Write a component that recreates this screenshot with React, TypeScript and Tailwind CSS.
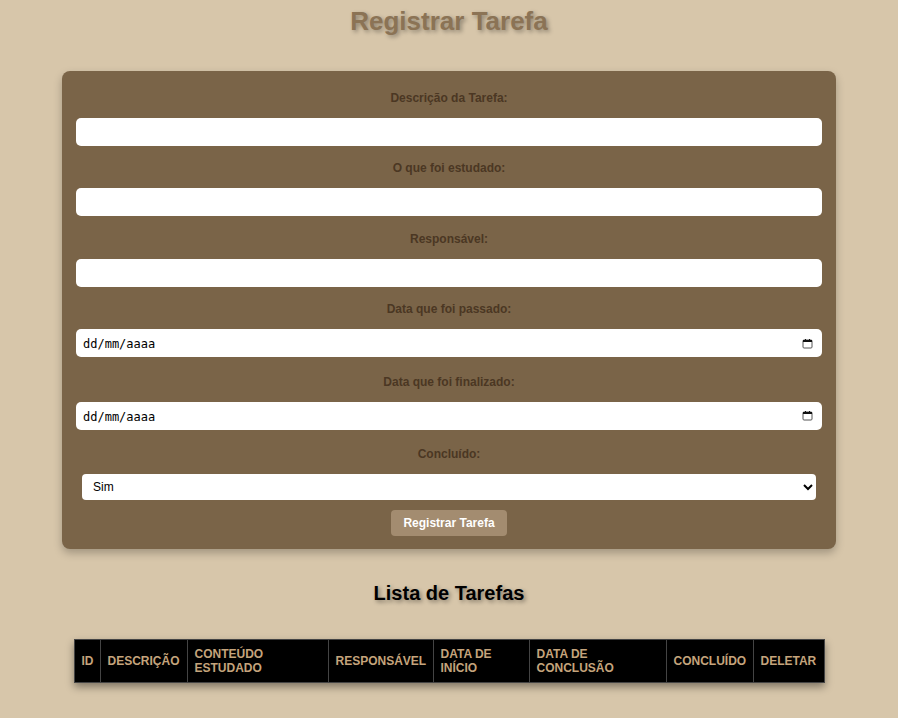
import React, { useState } from "react";

const fields = [
  { label: "Descrição da Tarefa:", type: "text" },
  { label: "O que foi estudado:", type: "text" },
  { label: "Responsável:", type: "text" },
  { label: "Data que foi passado:", type: "date" },
  { label: "Data que foi finalizado:", type: "date" },
];

const columns = [
  { title: "ID", w: "w-[26px]" },
  { title: "Descrição", w: "w-[87px]" },
  { title: "Conteúdo Estudado", w: "w-[141px]" },
  { title: "Responsável", w: "w-[105px]" },
  { title: "Data de Início", w: "w-[96px]" },
  { title: "Data de Conclusão", w: "w-[137px]" },
  { title: "Concluído", w: "w-[87px]" },
  { title: "Deletar", w: "w-[71px]" },
];

const CalendarIcon = () => (
  <svg width="11" height="11" viewBox="0 0 11 11" className="shrink-0">
    <rect x="1" y="2" width="9" height="8" rx="1" fill="white" stroke="#555" strokeWidth="1" />
    <rect x="1" y="2" width="9" height="2" fill="#111" />
    <rect x="3" y="1" width="1" height="2" fill="#111" />
    <rect x="7" y="1" width="1" height="2" fill="#111" />
  </svg>
);

const DateField = () => (
  <div className="h-7 w-full rounded-[5px] bg-white flex items-center justify-between pl-[7px] pr-[9px]">
    <span className="font-['DejaVu_Sans_Mono',monospace] text-[12px] text-black pt-[2px]">dd/mm/aaaa</span>
    <CalendarIcon />
  </div>
);

export default function App() {
  const [done, setDone] = useState("Sim");

  return (
    <div className="min-h-[718px] bg-[#d7c6aa] font-['Liberation_Sans',Arial,sans-serif] pt-[6px]">
      <h1 className="text-center text-[26px] leading-[30px] font-bold text-[#8b7355] [text-shadow:2px_2px_4px_rgba(0,0,0,0.35)]">
        Registrar Tarefa
      </h1>

      <form
        className="w-[774px] mx-auto mt-[35px] bg-[#7a6448] rounded-lg px-[14px] pt-[18.5px] pb-[13px] shadow-[0_4px_8px_rgba(0,0,0,0.25)] flex flex-col"
        onSubmit={(e) => e.preventDefault()}
      >
        {fields.map((f) => (
          <div key={f.label} className={`flex flex-col ${f.type === "date" ? "mb-[16.5px]" : "mb-[14.5px]"}`}>
            <label className="text-center text-[12px] leading-4 font-bold text-[#4b3723] mb-3">
              {f.label}
            </label>
            {f.type === "date" ? (
              <DateField />
            ) : (
              <input type="text" className="h-7 w-full rounded-[5px] bg-white px-2 text-[13px] outline-none" />
            )}
          </div>
        ))}

        <label className="text-center text-[12px] leading-4 font-bold text-[#4b3723] mb-3">
          Concluído:
        </label>
        <select
          value={done}
          onChange={(e) => setDone(e.target.value)}
          className="mx-[6px] h-[26px] rounded-[4px] bg-white pl-[7px] pr-[5px] text-[12px] text-black outline-none"
        >
          <option value="Sim">Sim</option>
          <option value="Não">Não</option>
        </select>

        <button
          type="submit"
          className="self-center mt-[10px] h-[26px] px-3 rounded-[4px] bg-[#a38c70] text-white text-[12px] font-bold"
        >
          Registrar Tarefa
        </button>
      </form>

      <h2 className="text-center text-[20px] leading-6 font-bold text-black mt-[32px] [text-shadow:2px_2px_4px_rgba(0,0,0,0.4)]">
        Lista de Tarefas
      </h2>

      <table className="table-fixed border-collapse w-[750px] mx-auto mt-[34px] bg-black shadow-[0_4px_8px_rgba(0,0,0,0.4)] border border-[#444]">
        <thead>
          <tr>
            {columns.map((c) => (
              <th
                key={c.title}
                className={`${c.w} border border-[#444] px-[7px] py-[7px] text-left text-[12px] leading-[14px] font-bold uppercase text-[#c5a47c]`}
              >
                {c.title}
              </th>
            ))}
          </tr>
        </thead>
        <tbody></tbody>
      </table>
    </div>
  );
}
